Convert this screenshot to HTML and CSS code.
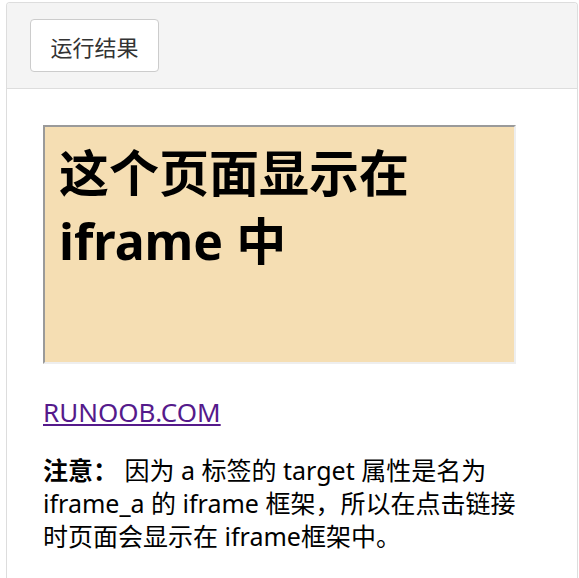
FILE: index.html
```html
<!DOCTYPE html>
<html lang="zh">
<head>
<meta charset="utf-8">
<title>运行结果</title>
<link rel="stylesheet" href="styles.css">
</head>
<body>
<div class="panel">
  <div class="panel-head">
    <button class="tab-btn" type="button">运行结果</button>
  </div>
  <div class="panel-body">
    <div class="frame">
      <h1 class="frame-title">这个页面显示在 iframe 中</h1>
    </div>
    <p class="link-line"><a class="site-link" href="#">RUNOOB.COM</a></p>
    <p class="note"><b>注意：</b> 因为 a 标签的 target 属性是名为 iframe_a 的 iframe 框架，所以在点击链接时页面会显示在 iframe框架中。</p>
  </div>
</div>
</body>
</html>
```

FILE: styles.css
```css
html, body {
  margin: 0;
  padding: 0;
  background: #fff;
}
body {
  padding: 2px 1px 0 6px;
  font-family: "Noto Sans", "Noto Sans CJK SC", sans-serif;
  color: #000;
}
.panel {
  border: 1px solid #ddd;
  border-bottom: none;
  border-radius: 4px 4px 0 0;
  height: 575px;
  overflow: hidden;
}
.panel-head {
  background: #f4f4f4;
  border-bottom: 1px solid #ddd;
  padding: 16px 23px 16px;
}
.tab-btn {
  display: block;
  box-sizing: border-box;
  width: 129px;
  height: 53px;
  background: #fff;
  border: 1px solid #ccc;
  border-radius: 4px;
  font-family: "Noto Sans CJK SC", sans-serif;
  font-size: 22px;
  color: #333;
  padding: 0;
}
.panel-body {
  padding: 36px 36px 0 36px;
}
.frame {
  box-sizing: border-box;
  width: 473px;
  height: 239px;
  border: 2px solid;
  border-color: #9a9a9a #eeeeee #eeeeee #9a9a9a;
  background: #f5deb3;
  padding: 12px 14px;
}
.frame-title {
  margin: 0;
  font-family: "Noto Sans", "Noto Sans CJK SC", sans-serif;
  font-size: 50px;
  line-height: 68px;
  font-weight: 700;
}
.link-line {
  margin: 32px 0 0;
  font-size: 26px;
  line-height: 33px;
}
.site-link {
  color: #551a8b;
  text-decoration: underline;
}
.note {
  margin: 25px 0 0;
  font-size: 25px;
  line-height: 33px;
  width: 480px;
}
.note b {
  font-weight: 700;
}
```
